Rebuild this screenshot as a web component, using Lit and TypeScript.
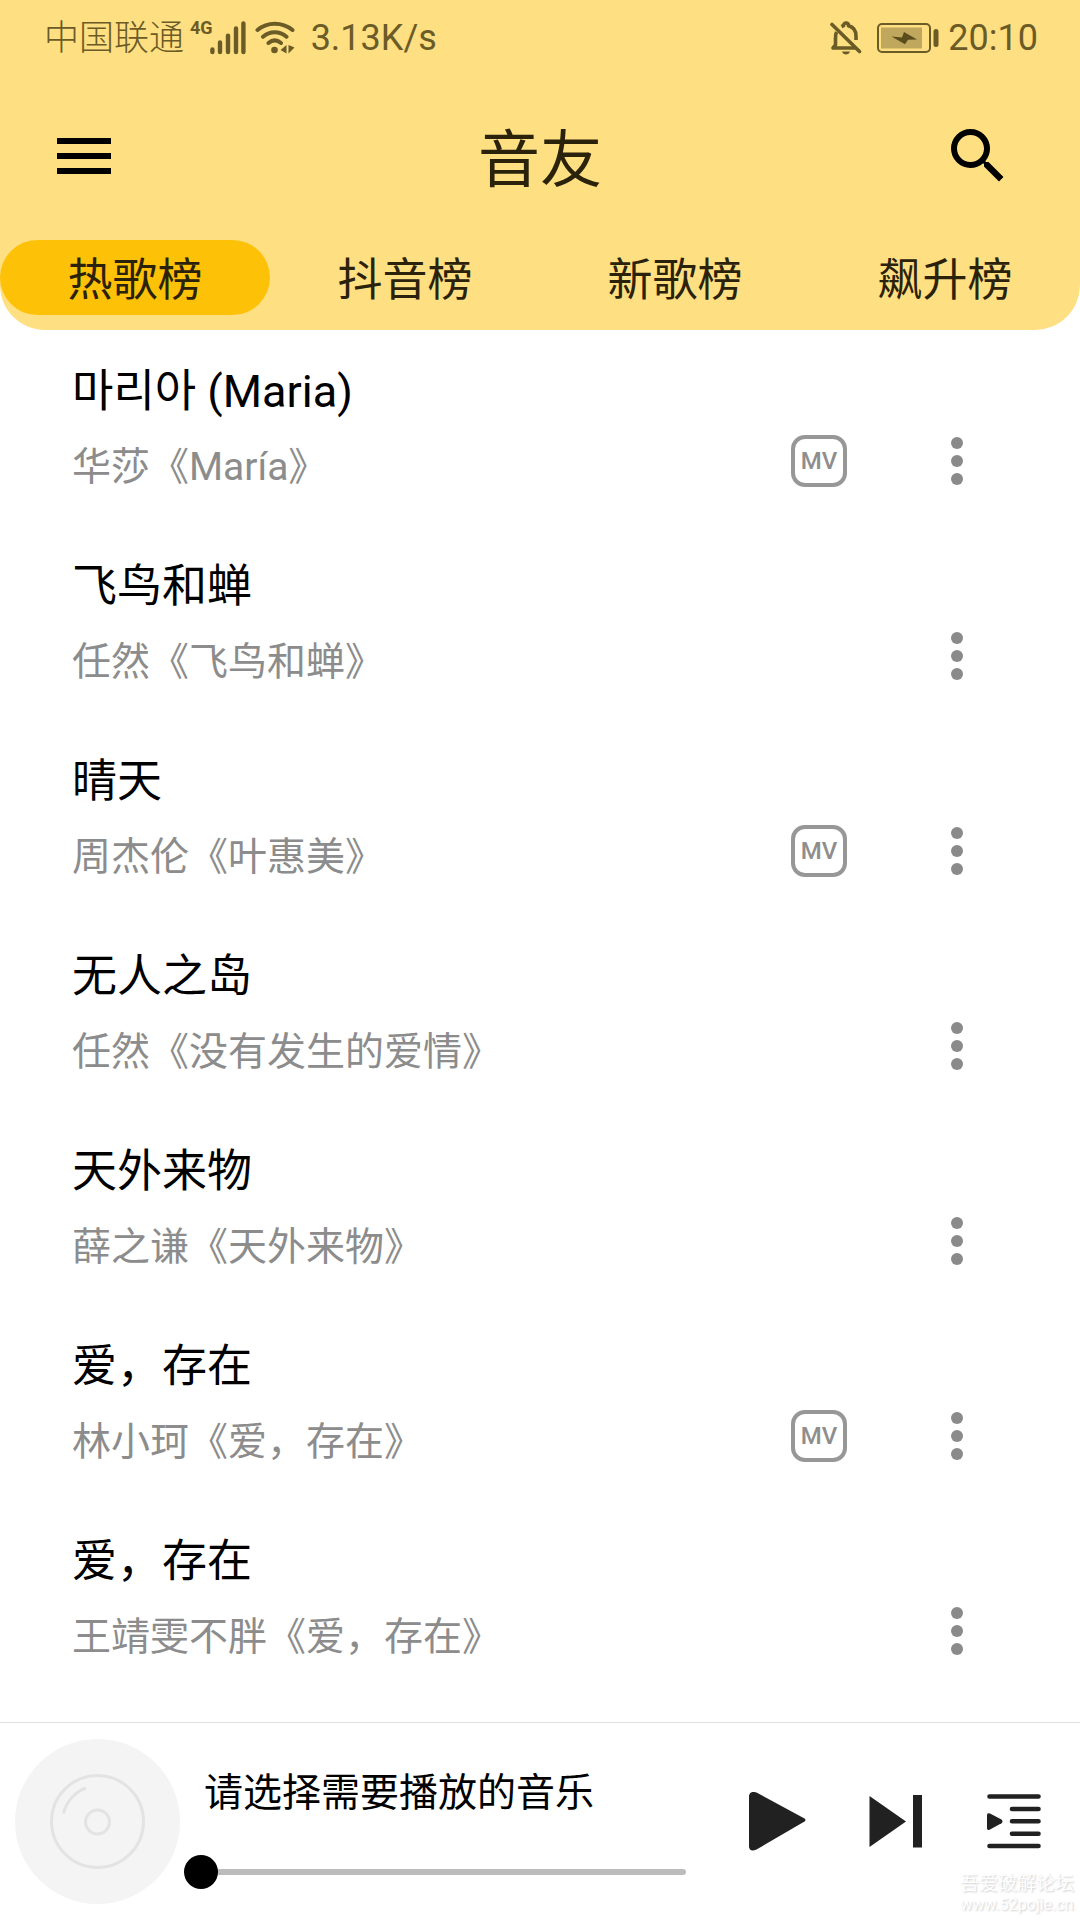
import { LitElement, html, css, svg, nothing } from "lit";
import { customElement, property, state } from "lit/decorators.js";
import { classMap } from "lit/directives/class-map.js";

interface Song {
  title: string;
  artist: string;
  mv: boolean;
}

const CHARTS = ["热歌榜", "抖音榜", "新歌榜", "飙升榜"];

const SONGS: Song[] = [
  { title: "마리아 (Maria)", artist: "华莎《María》", mv: true },
  { title: "飞鸟和蝉", artist: "任然《飞鸟和蝉》", mv: false },
  { title: "晴天", artist: "周杰伦《叶惠美》", mv: true },
  { title: "无人之岛", artist: "任然《没有发生的爱情》", mv: false },
  { title: "天外来物", artist: "薛之谦《天外来物》", mv: false },
  { title: "爱，存在", artist: "林小珂《爱，存在》", mv: true },
  { title: "爱，存在", artist: "王靖雯不胖《爱，存在》", mv: false },
];

const base = css`
  * {
    box-sizing: border-box;
  }
  button {
    margin: 0;
    padding: 0;
    border: 0;
    background: none;
    color: inherit;
    font: inherit;
    cursor: pointer;
  }
  svg {
    display: block;
  }
`;

@customElement("status-bar")
export class StatusBar extends LitElement {
  static styles = [
    base,
    css`
      :host {
        box-sizing: border-box;
        display: flex;
        justify-content: space-between;
        align-items: center;
        height: 74px;
        padding: 2px 42px 0 44px;
        color: #6b5b26;
        font-size: 36px;
        line-height: 42px;
      }
      .side {
        display: flex;
        align-items: center;
      }
      .carrier {
        padding-top: 2px;
        font-size: 35px;
        font-weight: 300;
      }
      .network {
        align-self: flex-start;
        margin-left: 6px;
        font-size: 18px;
        line-height: 24px;
        font-weight: 700;
      }
      .signal {
        margin-left: -3px;
      }
      .wifi {
        margin: 0 16px 0 9px;
      }
      .battery {
        margin: 0 9px 0 15px;
      }
    `,
  ];

  render() {
    return html`
      <div class="side">
        <span class="carrier">中国联通</span>
        <span class="network">4G</span>
        <svg class="signal" width="36" height="34" viewBox="0 0 36 34" stroke="currentColor" stroke-width="4.4" stroke-linecap="round" aria-hidden="true">
          <path d="M2.4 28.500v2.500M10 21.500v9.500M18 14.600v16.400M26 7.500v23.500M33.400 2.400v28.600" />
        </svg>
        <svg class="wifi" width="40" height="34" viewBox="0 0 40 34" fill="none" stroke="currentColor" stroke-width="4" stroke-linecap="round" aria-hidden="true">
          <path d="M2.500 9C12.500 .6 27 .6 37.500 9M8 15.800c7-6 16.500-6 23.500 0M13.500 22c4-3.300 8.500-3.300 12.500 0" />
          <circle cx="19.500" cy="29" r="3.300" fill="currentColor" stroke="none" />
          <path d="M31.500 24.500v8.500l-6-3.500zM33.500 24.500v8.500l6-6z" transform="translate(0 -.5)" fill="currentColor" stroke="none" />
        </svg>
        <span>3.13K/s</span>
      </div>
      <div class="side">
        <svg width="32" height="34" viewBox="0 0 32 34" fill="none" stroke="currentColor" stroke-width="3.600" stroke-linejoin="round" aria-hidden="true">
          <path d="M6.500 11c-1 2-1 4-1 6.500V24L3 27h23M11.500 5.600C12.500 5 13 5 13.500 4.700c0-3.600 5-3.600 5 0 5 1.300 7.500 5.500 7.500 10.300v4" />
          <path d="M2 3.500L29.500 30.500" stroke-linecap="round" />
          <path d="M12 30.500h8c-1 4-7 4-8 0z" fill="currentColor" stroke="none" />
        </svg>
        <svg class="battery" width="62" height="30" viewBox="0 0 62 30" aria-hidden="true">
          <rect x="1" y="1" width="52" height="28" rx="4" fill="none" stroke="currentColor" stroke-width="2" />
          <rect x="4" y="4.500" width="41" height="21" fill="#bfa85e" />
          <path d="M14.500 13.500L25 14.500 27 9l13 7.500-9 .3-3 4.400z" fill="#5b4c1c" />
          <rect x="56.500" y="6" width="5" height="18" rx="2.500" fill="currentColor" />
        </svg>
        <span>20:10</span>
      </div>
    `;
  }
}

@customElement("song-row")
export class SongRow extends LitElement {
  @property({ attribute: false }) song!: Song;

  static styles = [
    base,
    css`
      :host {
        display: flex;
        align-items: flex-end;
        padding: 32px 87px 28px 72px;
      }
      .info {
        flex: 1;
        min-width: 0;
        display: flex;
        flex-direction: column;
        gap: 15px;
        line-height: 60px;
        white-space: nowrap;
      }
      .title {
        font-size: 45px;
        color: #000;
      }
      .artist {
        font-size: 39px;
        color: #8c8c8c;
      }
      .actions {
        display: flex;
        align-items: center;
        gap: 74px;
        height: 72px;
        color: #8a8a8a;
      }
      .mv {
        display: grid;
        place-items: center;
        width: 56px;
        height: 52px;
        border: 4px solid #979797;
        border-radius: 14px;
        font-size: 24px;
        line-height: 28px;
        font-weight: 500;
        color: #8e8e8e;
      }
    `,
  ];

  render() {
    const { title, artist, mv } = this.song;
    return html`
      <div class="info">
        <div class="title">${title}</div>
        <div class="artist">${artist}</div>
      </div>
      <div class="actions">
        ${mv ? html`<button class="mv" type="button">MV</button>` : nothing}
        <button type="button" aria-label="更多">
          <svg width="72" height="72" viewBox="0 0 72 72" fill="currentColor">
            <circle cx="36" cy="18" r="6" />
            <circle cx="36" cy="36" r="6" />
            <circle cx="36" cy="54" r="6" />
          </svg>
        </button>
      </div>
    `;
  }
}

@customElement("player-bar")
export class PlayerBar extends LitElement {
  static styles = [
    base,
    css`
      :host {
        box-sizing: border-box;
        display: flex;
        align-items: center;
        min-height: 198px;
        padding: 0 36px 0 15px;
        border-top: 1px solid #dedede;
        background: #fff;
        color: #212121;
      }
      .info {
        flex: 1;
        min-width: 0;
        display: flex;
        flex-direction: column;
        gap: 35px;
        margin: 0 62px 0 4px;
        padding-top: 12px;
      }
      .label {
        padding-left: 20px;
        font-size: 39px;
        line-height: 54px;
        color: #000;
        white-space: nowrap;
      }
      .seek {
        appearance: none;
        display: block;
        width: 100%;
        height: 34px;
        margin: 0;
        background: none;
      }
      .seek::-webkit-slider-runnable-track {
        height: 6px;
        border-radius: 3px;
        background: #bcbcbc;
      }
      .seek::-webkit-slider-thumb {
        appearance: none;
        width: 34px;
        height: 34px;
        margin-top: -14px;
        border-radius: 50%;
        background: #000;
      }
      .controls {
        display: flex;
        gap: 58px;
      }
    `,
  ];

  private control(label: string, shape: unknown) {
    return html`
      <button type="button" aria-label=${label}>
        <svg width="60" height="60" viewBox="0 0 60 60" fill="currentColor">${shape}</svg>
      </button>
    `;
  }

  render() {
    return html`
      <svg width="165" height="165" viewBox="0 0 165 165" fill="none" stroke="#e3e3e3" stroke-width="3" aria-hidden="true">
        <circle cx="82.500" cy="82.500" r="82.500" fill="#f4f4f4" stroke="none" />
        <circle cx="82.500" cy="82.500" r="46" />
        <circle cx="82.500" cy="83" r="12" />
        <path d="M48.500 74.500A35.500 35.500 0 0 1 71 49" />
      </svg>
      <div class="info">
        <label class="label" for="seek">请选择需要播放的音乐</label>
        <input class="seek" id="seek" type="range" min="0" max="100" value="0" />
      </div>
      <div class="controls">
        ${this.control("播放", svg`<path d="M1 3.500Q2 -1.500 8.500 .5L56.500 26.500Q58.500 28 56.500 29.500L8.500 57.500Q2 60.500 1 55z" />`)}
        ${this.control("下一首", svg`<path d="M3.500 4L40 29.500 3.500 55zM47 3h9v52.500h-9z" />`)}
        ${this.control(
          "播放列表",
          svg`<path d="M5.500 4.500h49M28 17h26.500M28 29.300h26.500M28 41.800h26.500M5.500 54h49" stroke="currentColor" stroke-width="4.600" stroke-linecap="round" />
            <path d="M3 23Q3 20.300 6 21.500L17.500 27.500Q19.500 29.500 17.500 31.300L6 37.500Q3 39 3 36z" />`
        )}
      </div>
    `;
  }
}

@customElement("app-root")
export class AppRoot extends LitElement {
  @state() private active = 0;

  static styles = [
    base,
    css`
      :host {
        position: relative;
        display: flex;
        flex-direction: column;
        min-height: 100vh;
        background: #fff;
        font-family: "Roboto", "Noto Sans CJK SC", "Noto Sans CJK KR", sans-serif;
      }
      .header {
        padding-bottom: 15px;
        border-radius: 0 0 45px 45px;
        background: #fedf82;
      }
      .toolbar {
        display: grid;
        grid-template-columns: 1fr auto 1fr;
        align-items: center;
        height: 166px;
        padding: 0 66px 2px 48px;
      }
      .toolbar .search {
        justify-self: end;
      }
      .toolbar .menu {
        justify-self: start;
      }
      .name {
        margin: 0 0 0 18px;
        padding-top: 10px;
        font-size: 62px;
        line-height: 84px;
        font-weight: 400;
        color: #2b220b;
      }
      .tabs {
        display: grid;
        grid-template-columns: repeat(4, 1fr);
      }
      .tab {
        height: 75px;
        padding-top: 6px;
        border-radius: 38px;
        font-size: 45px;
        line-height: 60px;
        color: #2b220b;
      }
      .tab.active {
        background: #fdc107;
      }
      .songs {
        flex: 1;
        margin: 0;
        padding: 0;
        list-style: none;
      }
      .watermark {
        position: absolute;
        right: 6px;
        bottom: 5px;
        font-size: 19px;
        line-height: 21px;
        text-align: center;
        color: #fff;
        text-shadow: 1px 1px 2px #ccc;
        pointer-events: none;
      }
      .site {
        font-size: 16px;
      }
    `,
  ];

  render() {
    return html`
      <header class="header">
        <status-bar></status-bar>
        <div class="toolbar">
          <button class="menu" type="button" aria-label="菜单">
            <svg width="72" height="72" viewBox="0 0 24 24"><path d="M3 18h18v-2H3v2zm0-5h18v-2H3v2zm0-7v2h18V6H3z" /></svg>
          </button>
          <h1 class="name">音友</h1>
          <button class="search" type="button" aria-label="搜索">
            <svg width="72" height="72" viewBox="0 0 24 24">
              <path d="M15.500 14h-.79l-.28-.27A6.471 6.471 0 0 0 16 9.500 6.500 6.500 0 1 0 9.500 16c1.610 0 3.090-.59 4.230-1.570l.27.28v.79l5 4.990L20.490 19l-4.990-5zm-6 0C7.010 14 5 11.990 5 9.500S7.010 5 9.500 5 14 7.010 14 9.500 11.990 14 9.500 14z" />
            </svg>
          </button>
        </div>
        <nav class="tabs">
          ${CHARTS.map(
            (chart, i) => html`
              <button
                type="button"
                class=${classMap({ tab: true, active: i === this.active })}
                @click=${() => (this.active = i)}
              >${chart}</button>
            `
          )}
        </nav>
      </header>
      <ul class="songs">
        ${SONGS.map((song) => html`<li><song-row .song=${song}></song-row></li>`)}
      </ul>
      <player-bar></player-bar>
      <div class="watermark">
        <div>吾爱破解论坛</div>
        <div class="site">www.52pojie.cn</div>
      </div>
    `;
  }
}
